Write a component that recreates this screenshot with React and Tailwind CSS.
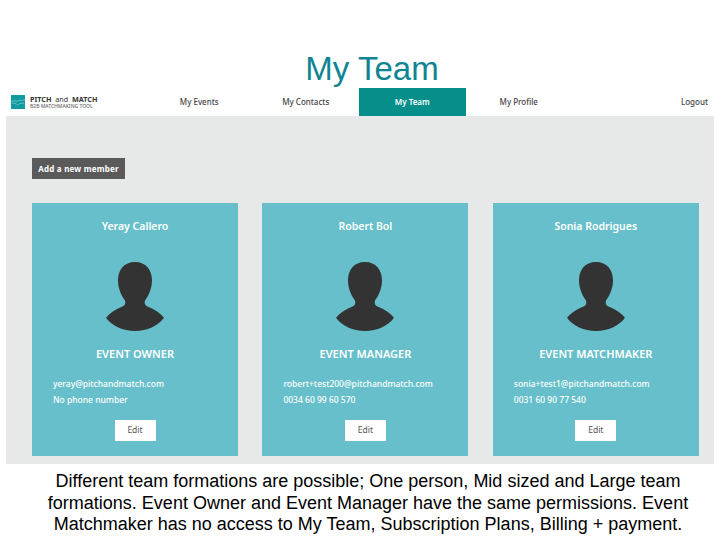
import React from 'react';

const members = [
  { name: 'Yeray Callero', role: 'EVENT OWNER', email: 'yeray@pitchandmatch.com', phone: 'No phone number' },
  { name: 'Robert Bol', role: 'EVENT MANAGER', email: 'robert+test200@pitchandmatch.com', phone: '0034 60 99 60 570' },
  { name: 'Sonia Rodrigues', role: 'EVENT MATCHMAKER', email: 'sonia+test1@pitchandmatch.com', phone: '0031 60 90 77 540' },
];

const tabs = ['My Events', 'My Contacts', 'My Team', 'My Profile'];

const Avatar = () => (
  <svg width="58" height="71" viewBox="0 0 58 70" preserveAspectRatio="none" className="block">
    <path
      fill="#333333"
      d="M29 1 C40 1 46 9 46 19 C46 28 42 35 39 39 C38 42 39 44 42 45 C48 47 54 51 58 56 C52 64 41 69 29 69 C17 69 6 64 0 56 C4 51 10 47 16 45 C19 44 20 42 19 39 C16 35 12 28 12 19 C12 9 18 1 29 1 Z"
    />
  </svg>
);

const Logo = () => (
  <div className="flex items-center gap-[5px]">
    <svg width="14" height="14" viewBox="0 0 14 14" className="block">
      <rect width="14" height="14" fill="#0f9aa0" />
      <path d="M0 7 L3 5.5 L6 6.5 L8 5 L11 5.5 L14 4.5 M1 8.5 L4 8 L6.5 10 L9 8.5 L13 8" fill="none" stroke="#7fd0d0" strokeWidth="0.7" />
    </svg>
    <div className="font-['Noto_Sans',sans-serif] text-[#333]">
      <div className="text-[7.2px] leading-[8px] font-bold whitespace-nowrap">
        PITCH <span className="font-normal mx-[2px]">and</span> MATCH
      </div>
      <div className="text-[5px] leading-[6px] text-[#666] whitespace-nowrap">B2B MATCHMAKING TOOL</div>
    </div>
  </div>
);

const Card = ({ member }) => (
  <div className="bg-[#66bfca] h-[253px] flex flex-col items-center text-white font-['Noto_Sans',sans-serif] font-medium">
    <div className="mt-[15px] text-[10.5px] leading-[16px] font-semibold">{member.name}</div>
    <div className="mt-[27px]">
      <Avatar />
    </div>
    <div className="mt-[14px] text-[11px] leading-[16px] font-semibold">{member.role}</div>
    <div className="mt-[14px] w-full pl-[21px] text-[8.5px] leading-[16px]">
      <div>{member.email}</div>
      <div>{member.phone}</div>
    </div>
    <button className="mt-[12px] w-[41px] h-[21px] bg-white text-[#555] text-[8.5px] font-normal">Edit</button>
  </div>
);

export default function App() {
  return (
    <div className="w-[720px] h-[540px] bg-white overflow-hidden">
      <h1 className="h-[88px] pt-[49px] pl-[24px] text-center text-[#0d8592] text-[33px] leading-[40px] font-['Liberation_Sans',sans-serif]">
        My Team
      </h1>
      <nav className="h-[28px] flex items-stretch text-[8px] text-[#444] font-['Noto_Sans',sans-serif] font-medium">
        <div className="w-[146px] pl-[11px] flex items-center">
          <Logo />
        </div>
        {tabs.map((t) => (
          <div
            key={t}
            className={t === 'My Team'
              ? 'w-[106.5px] flex items-center justify-center bg-[#058e8a] text-white font-semibold'
              : 'w-[106.5px] flex items-center justify-center'}
          >
            {t}
          </div>
        ))}
        <div className="flex-1 flex items-center justify-end pr-[12px]">Logout</div>
      </nav>
      <main className="mx-[6px] h-[348px] bg-[#e7e8e8] px-[26px] pt-[42px]">
        <button className="block w-[93px] h-[21px] bg-[#5a5a5a] text-white text-[8px] font-bold tracking-[0.2px] font-['Noto_Sans',sans-serif]">
          Add a new member
        </button>
        <div className="mt-[24px] grid grid-cols-[repeat(3,206px)] gap-x-[24.4px]">
          {members.map((m) => (
            <Card key={m.name} member={m} />
          ))}
        </div>
      </main>
      <p className="mt-[7px] pl-[16px] text-center text-black text-[18px] leading-[21.5px] font-['Liberation_Sans',sans-serif]">
        Different team formations are possible; One person, Mid sized and Large team
        <br />
        formations. Event Owner and Event Manager have the same permissions. Event
        <br />
        Matchmaker has no access to My Team, Subscription Plans, Billing + payment.
      </p>
    </div>
  );
}
